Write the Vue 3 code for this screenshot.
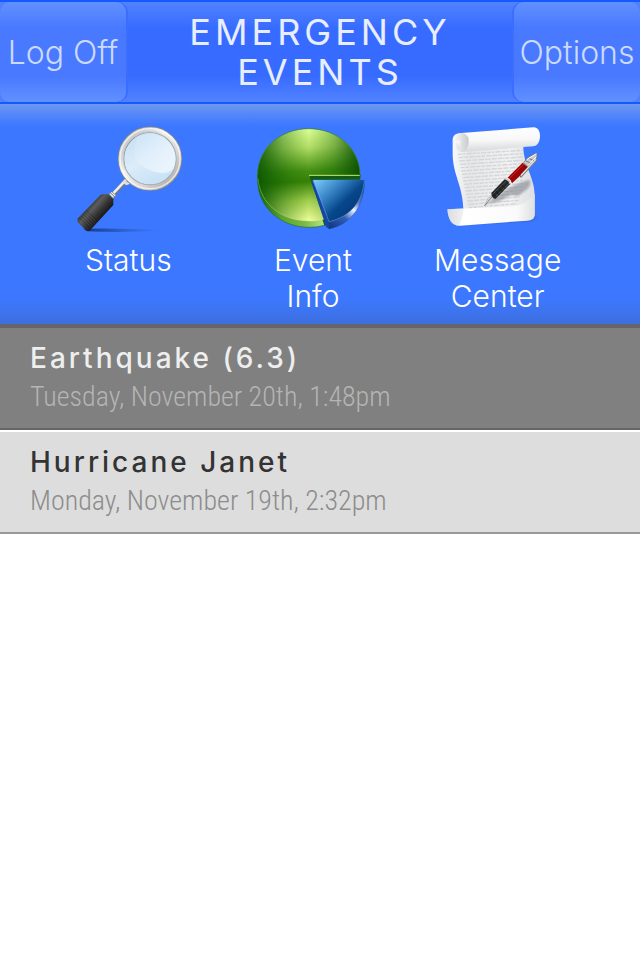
<script setup>
const events = [
  { id: 1, name: 'Earthquake (6.3)', date: 'Tuesday, November 20th, 1:48pm', active: true },
  { id: 2, name: 'Hurricane Janet', date: 'Monday, November 19th, 2:32pm', active: false },
]

// rows of writing on the scroll
const lines = Array.from({ length: 17 }, (_, i) => {
  const y = 118 + i * 10
  const left = i < 6 ? 84 + i * 2 : 96 + (i - 6) * 2
  const right = 278 - Math.max(0, i - 12) * 4
  return { d: `M${left} ${y}L${right} ${y - 12}`, dash: `${11 + (i % 4) * 3} 3 ${7 + (i % 3) * 4} 4 16 3` }
})
</script>

<template>
  <main class="app">
    <header class="topbar">
      <button type="button" class="topbar__button topbar__button--left">Log Off</button>
      <h1 class="topbar__title">EMERGENCY EVENTS</h1>
      <button type="button" class="topbar__button topbar__button--right">Options</button>
    </header>

    <nav class="menu">
      <a href="#status" class="menu__item">
        <svg class="menu__icon" viewBox="-6 15 420 366" aria-hidden="true">
          <defs>
            <linearGradient id="lens" x1="0.2" y1="0" x2="0.7" y2="1">
              <stop offset="0" stop-color="#c2def4" />
              <stop offset="0.5" stop-color="#dcecf9" />
              <stop offset="1" stop-color="#c3dff5" />
            </linearGradient>
            <linearGradient id="shine" x1="0" y1="0" x2="0.8" y2="0.8">
              <stop offset="0" stop-color="#cfe5f7" />
              <stop offset="1" stop-color="#f3f9ff" />
            </linearGradient>
            <linearGradient id="rim" x1="0" y1="0" x2="1" y2="1">
              <stop offset="0" stop-color="#b5b5b5" />
              <stop offset="0.4" stop-color="#f1f1ef" />
              <stop offset="0.7" stop-color="#d6d4d2" />
              <stop offset="1" stop-color="#9d9b99" />
            </linearGradient>
            <linearGradient id="grip" x1="70" y1="265" x2="130" y2="318" gradientUnits="userSpaceOnUse">
              <stop offset="0" stop-color="#161616" />
              <stop offset="0.4" stop-color="#5c5c5c" />
              <stop offset="0.65" stop-color="#343434" />
              <stop offset="1" stop-color="#0b0b0b" />
            </linearGradient>
            <linearGradient id="floor" x1="0" y1="0" x2="1" y2="0">
              <stop offset="0" stop-color="#122d6b" stop-opacity="0.9" />
              <stop offset="1" stop-color="#225bd0" stop-opacity="0" />
            </linearGradient>
          </defs>
          <path d="M70 341Q180 338 315 346Q200 354 80 349Z" fill="url(#floor)" />
          <path d="M158 240L200 195" stroke="#777" stroke-width="13" />
          <path d="M157 238L199 193" stroke="#eee" stroke-width="8" />
          <path d="M192 194L211 206L199 211L190 205Z" fill="#ddd" />
          <path d="M147 237L155 230L168 241L159 250Z" fill="#e9e9e9" stroke="#777" stroke-width="2" />
          <path d="M151 233L164 246" stroke="#777" stroke-width="3" />
          <path d="M121 240Q130 235 145 238L160 253V270L91 345Q85 351 77 344L54 323Q49 317 54 310Z" fill="url(#grip)" />
          <g stroke="#171717" stroke-width="2" opacity="0.6">
            <path d="M58 307L93 340M63 302L98 335M68 296L103 329M73 291L108 324M78 286L113 319" />
          </g>
          <g stroke="#777" stroke-width="1" opacity="0.6">
            <path d="M60 305L95 338M65 300L100 333M70 294L105 327M75 289L110 322" />
          </g>
          <circle cx="270" cy="131" r="87" fill="url(#lens)" stroke="#858585" stroke-width="19" />
          <circle cx="270" cy="131" r="87" fill="none" stroke="url(#rim)" stroke-width="15" />
          <circle cx="270" cy="131" r="90" fill="none" stroke="#fff" stroke-width="4" opacity="0.7" />
          <circle cx="269" cy="130" r="80" fill="none" stroke="#b9c3cc" stroke-width="2" />
          <path d="M237 63Q290 45 326 80Q358 119 340 162Q322 181 282 170Q237 157 225 122Q218 91 237 63Z" fill="url(#shine)" opacity="0.7" />
        </svg>
        <span class="menu__label">Status</span>
      </a>
      <a href="#info" class="menu__item">
        <svg class="menu__icon" viewBox="-6 15 420 366" aria-hidden="true">
          <defs>
            <linearGradient id="pie" x1="0.45" y1="0" x2="0.5" y2="1">
              <stop offset="0" stop-color="#dcff96" />
              <stop offset="0.2" stop-color="#b4df68" />
              <stop offset="0.46" stop-color="#438f13" />
              <stop offset="0.57" stop-color="#358108" />
              <stop offset="0.78" stop-color="#a2cf50" />
              <stop offset="1" stop-color="#f1ff9b" />
            </linearGradient>
            <linearGradient id="pieShade">
              <stop offset="0" stop-color="#095400" stop-opacity="0.9" />
              <stop offset="0.24" stop-color="#0d5d00" stop-opacity="0.4" />
              <stop offset="0.5" stop-color="#2b7900" stop-opacity="0" />
              <stop offset="0.75" stop-color="#0b5800" stop-opacity="0.35" />
              <stop offset="1" stop-color="#064b00" stop-opacity="0.9" />
            </linearGradient>
            <linearGradient id="pieSide">
              <stop offset="0" stop-color="#12650a" />
              <stop offset="0.25" stop-color="#5ca531" />
              <stop offset="0.45" stop-color="#79b846" />
              <stop offset="0.76" stop-color="#dcfa9c" />
              <stop offset="1" stop-color="#86bd55" />
            </linearGradient>
            <linearGradient id="slice" x1="0" y1="0" x2="0.8" y2="0.7">
              <stop offset="0" stop-color="#80cfff" />
              <stop offset="0.45" stop-color="#347fc0" />
              <stop offset="0.75" stop-color="#07478b" />
              <stop offset="1" stop-color="#063b80" />
            </linearGradient>
            <linearGradient id="sliceSide" x1="250" y1="335" x2="358" y2="200" gradientUnits="userSpaceOnUse">
              <stop offset="0" stop-color="#133781" />
              <stop offset="0.3" stop-color="#315fb5" />
              <stop offset="0.5" stop-color="#edf3ff" />
              <stop offset="0.65" stop-color="#587bbe" />
              <stop offset="1" stop-color="#062f78" />
            </linearGradient>
          </defs>
          <path d="M38 180V203C42 278 106 337 195 337Q218 337 238 331V310L195 185H346V180Z" fill="url(#pieSide)" stroke="#246c25" stroke-width="2" />
          <path d="M193 181H346V194H204L201 204L246 332L238 331L193 198Z" fill="#135c11" />
          <path d="M192 181L238 313Q216 320 191 318C103 318 38 256 38 180C38 101 106 41 191 41C278 41 345 101 345 181Z" fill="url(#pie)" />
          <path d="M192 181L238 313Q216 320 191 318C103 318 38 256 38 180C38 101 106 41 191 41C278 41 345 101 345 181Z" fill="url(#pieShade)" />
          <path d="M38 180C38 101 106 41 191 41C278 41 345 101 345 181" fill="none" stroke="#347a20" stroke-width="2" />
          <path d="M39 191C46 267 109 318 191 318Q215 320 238 313" fill="none" stroke="#bfe97d" stroke-width="2" opacity="0.5" />
          <path d="M192 181H344" fill="none" stroke="#bfe97d" stroke-width="3" />
          <path d="M203 198L253 321V342L244 337L200 205Z" fill="#1448a0" />
          <path d="M358 194V210C354 276 316 329 252 342V319C319 302 353 257 358 194Z" fill="url(#sliceSide)" stroke="#143f8b" stroke-width="1" />
          <path d="M205 195H358C354 257 318 305 252 320Z" fill="url(#slice)" />
          <path d="M358 195C354 257 318 305 252 320L205 195" fill="none" stroke="#79bef1" stroke-width="2" opacity="0.6" />
        </svg>
        <span class="menu__label">Event<br>Info</span>
      </a>
      <a href="#messages" class="menu__item">
        <svg class="menu__icon" viewBox="-6 15 420 366" aria-hidden="true">
          <defs>
            <linearGradient id="paper">
              <stop offset="0" stop-color="#f9f9f9" />
              <stop offset="0.2" stop-color="#e4e6e8" />
              <stop offset="0.7" stop-color="#f1f1f1" />
              <stop offset="1" stop-color="#dcdee1" />
            </linearGradient>
            <linearGradient id="roll" x1="0" y1="0" x2="0.1" y2="1">
              <stop offset="0" stop-color="#fff" />
              <stop offset="0.55" stop-color="#f8f8f8" />
              <stop offset="1" stop-color="#d7d8db" />
            </linearGradient>
            <linearGradient id="curl">
              <stop offset="0" stop-color="#f8f8f8" />
              <stop offset="1" stop-color="#c9cacd" />
            </linearGradient>
            <linearGradient id="foot">
              <stop offset="0" stop-color="#d7d9dc" />
              <stop offset="0.17" stop-color="#fff" />
              <stop offset="0.8" stop-color="#fafafa" />
              <stop offset="1" stop-color="#dedfe1" />
            </linearGradient>
            <filter id="soft" x="-20%" y="-20%" width="140%" height="140%">
              <feGaussianBlur stdDeviation="3" />
            </filter>
          </defs>
          <path d="M70 330L303 317L319 306L306 298Z" fill="#163b8e" opacity="0.5" filter="url(#soft)" />
          <path d="M68 83C66 60 77 54 94 55L280 85C277 150 314 185 314 240V302L100 320C106 215 69 190 68 118Z" fill="url(#paper)" />
          <g fill="none" stroke="#d3d5d7" stroke-width="4">
            <path v-for="line in lines" :key="line.d" :d="line.d" :stroke-dasharray="line.dash" />
          </g>
          <path d="M52 283L250 274Q288 270 314 236V303Q312 316 292 317L91 332Q56 335 52 283Z" fill="url(#foot)" />
          <path d="M52 283L101 280Q97 318 83 332Q56 329 52 283Z" fill="#dfe0e2" opacity="0.5" />
          <path d="M94 54L310 37C323 36 330 48 330 62C330 80 322 93 309 94L98 111C83 112 76 94 77 77C78 62 84 55 94 54Z" fill="url(#roll)" />
          <path d="M72 77Q78 53 99 54Q119 60 116 84Q112 109 94 110L82 108Q95 95 91 76Z" fill="url(#curl)" />
          <path d="M176 266Q221 216 298 194Q307 210 286 227L261 244Q250 235 232 245Q210 261 176 266Z" fill="#777b83" opacity="0.55" filter="url(#soft)" />
          <path d="M164 272L173 250L192 237L195 244L181 262Z" fill="#d7d7d7" stroke="#85878a" stroke-width="1" />
          <path d="M164 272L188 243" stroke="#5b5b5b" stroke-width="2" />
          <path d="M184 234L224 193Q240 191 241 207L196 252Q184 249 184 234Z" fill="#262728" />
          <path d="M188 238L229 198M195 246L237 205" stroke="#64686b" stroke-width="2" />
          <path d="M190 236L199 247M198 228L208 239M207 219L217 230M216 210L226 221" stroke="#111" stroke-width="2" />
          <path d="M226 191L236 197L241 207" fill="none" stroke="#cecece" stroke-width="4" />
          <path d="M233 188L278 143L296 158L246 205Q242 192 233 188Z" fill="#9d0505" />
          <path d="M238 190L282 147" stroke="#d93a36" stroke-width="2" />
          <path d="M280 143L297 125L322 114L319 134L296 158Z" fill="#c6c7c9" stroke="#65686b" stroke-width="2" />
          <path d="M288 138L309 148M296 130L316 139" stroke="#777a7e" stroke-width="3" />
          <path d="M290 134L319 116M297 148L319 125" stroke="#fff" stroke-width="3" />
          <path d="M318 135L273 184" stroke="#7b7e82" stroke-width="7" stroke-linecap="round" />
          <path d="M317 134L274 180" stroke="#e2e3e4" stroke-width="4" stroke-linecap="round" />
        </svg>
        <span class="menu__label">Message<br>Center</span>
      </a>
    </nav>

    <ul class="events">
      <li v-for="event in events" :key="event.id" class="event" :class="{ 'event--active': event.active }">
        <h2 class="event__name">{{ event.name }}</h2>
        <p class="event__date">{{ event.date }}</p>
      </li>
    </ul>
  </main>
</template>

<style>
body {
  background: #fff;
}
</style>

<style scoped>
.app {
  font-family: Inter, Roboto, "Liberation Sans", sans-serif;
}

.topbar {
  display: flex;
  align-items: stretch;
  justify-content: space-between;
  border-top: 2px solid #145aff;
  border-bottom: 2px solid #145aff;
  background: linear-gradient(#5183ff 0, #376bff 26px, #376bff 74px, #5183ff 100%);
}

.topbar__button {
  width: 126px;
  height: 100px;
  padding: 0;
  border: 0;
  border-radius: 10px;
  background: linear-gradient(#6190ff 0, #4979ff 26px, #4979ff 74px, #6190ff 100%);
  color: #cbdaff;
  font-family: inherit;
  font-size: 32px;
  font-weight: 300;
  white-space: nowrap;
}

.topbar__button--left {
  box-shadow: 2px 0 0 #3b6dff;
}

.topbar__button--right {
  box-shadow: -2px 0 0 #3b6dff;
}

.topbar__title {
  width: 280px;
  margin: 0;
  padding: 10px 0;
  color: #e8eeff;
  font-size: 36px;
  font-weight: 400;
  letter-spacing: 4px;
  line-height: 40px;
  text-align: center;
}

.menu {
  display: grid;
  grid-template-columns: repeat(3, 1fr);
  padding: 16px 50px 10px 36px;
  background: linear-gradient(#6e98f0 0, #5587f8 10px, #3c78ff 22px, #3c78ff calc(100% - 26px), #3e6fdf 100%);
}

.menu__item {
  display: flex;
  flex-direction: column;
  align-items: center;
  color: #fff;
  text-decoration: none;
}

.menu__icon {
  width: 140px;
  height: 122px;
}

.menu__label {
  font-size: 30px;
  font-weight: 300;
  line-height: 36px;
  text-align: center;
}

.events {
  margin: 0;
  padding: 0;
  border-top: 4px solid #666;
  list-style: none;
}

.event {
  padding: 12px 30px 10px;
  border-bottom: 2px solid #999;
  background: #ddd;
}

.event + .event {
  margin-top: 2px;
}

.event--active {
  border-color: #666;
  background: #808080;
}

.event__name {
  margin: 0;
  color: #333;
  font-size: 28px;
  font-weight: 500;
  letter-spacing: 3px;
  line-height: 36px;
}

.event__date {
  margin: 0;
  color: #8c8c8c;
  font-family: "Liberation Sans Narrow", "Roboto Condensed", Roboto, sans-serif;
  font-size: 28px;
  font-weight: 300;
  line-height: 42px;
}

.event--active .event__name {
  color: #eee;
}

.event--active .event__date {
  color: #b5b5b5;
}
</style>
